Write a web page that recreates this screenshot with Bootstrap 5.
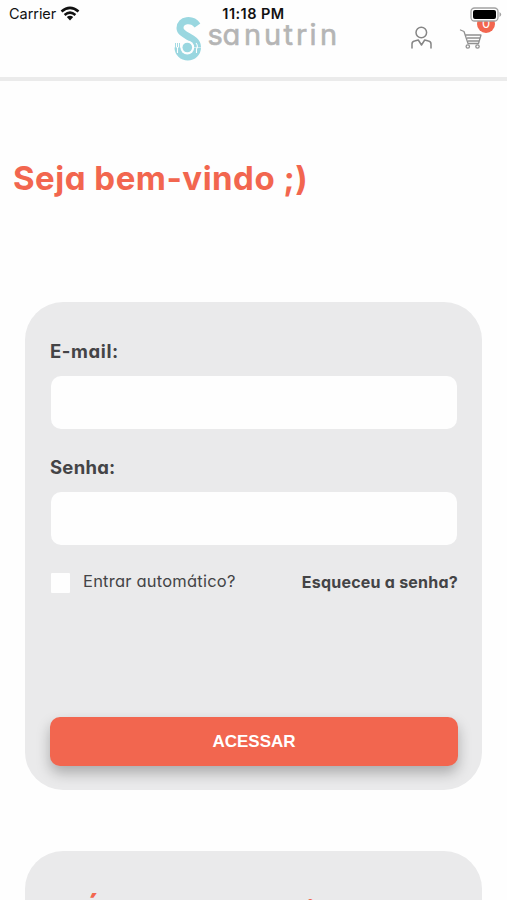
<!DOCTYPE html>
<html lang="pt-BR">
<head>
<meta charset="utf-8">
<meta name="viewport" content="width=device-width, initial-scale=1">
<title>Sanutrin</title>
<link href="https://cdn.jsdelivr.net/npm/bootstrap@5.3.0/dist/css/bootstrap.min.css" rel="stylesheet">
<style>
  html, body { height: 900px; overflow: hidden; }
  body { font-family: Inter, "Noto Sans", sans-serif; font-feature-settings: "cv11"; color: #444446; background: #fefefe; }
  .status-bar { font-size: 14px; line-height: 28px; height: 28px; color: #111; font-feature-settings: normal; z-index: 3; }
  .carrier { font-size: 14.5px; letter-spacing: -.05px; padding-left: 1px; }
  .clock { font-size: 14.5px; font-weight: 600; letter-spacing: .45px; }
  .site-header { height: 81px; border-bottom: 4px solid #ebebeb; }
  .logo { margin-left: 172px; margin-top: 14px; }
  .brand-text { font-size: 29px; font-weight: 400; fill: #b5b5b5; stroke: #b5b5b5; stroke-width: .6px; }
  .tools { margin-left: auto; margin-top: 25px; margin-right: 22px; gap: 24px; }
  .cart-count { width: 18px; height: 18px; top: -10px; left: 20px; font-size: 13px; line-height: 17px; background: #f2664f; }
  .headline { color: #f2664f; font-weight: 700; font-size: 32px; line-height: 48px; white-space: nowrap; }
  .welcome { margin: 73px 0 0 13px; font-size: 33px; letter-spacing: .5px; }
  .panel { background: #eaeaeb; border-radius: 38px; margin: 0 25px; }
  .login { margin-top: 100px; height: 488px; padding: 36px 24px 24px 25px; }
  .field-label { font-size: 18px; line-height: 27px; font-weight: 700; margin-bottom: 11px; }
  .label-email { font-size: 18.5px; letter-spacing: .6px; }
  .label-senha { font-size: 18.5px; letter-spacing: .25px; }
  .field { height: 53px; border: 0; border-radius: 10px; background: #fefefe; margin: 0 0 25px 1px; width: 406px; }
  .options { margin-top: -1px; height: 25px; font-size: 16px; }
  .form-check-input.auto { width: 19px; height: 20px; margin: 2px 13px 0 1px; border: 0; border-radius: 1px; background: #fefefe; }
  .auto-label { font-size: 16.5px; letter-spacing: .22px; }
  .forgot { color: #444446; font-weight: 700; text-decoration: none; letter-spacing: .23px; }
  .btn-enter { height: 49px; border: 0; border-radius: 10px; background: #f2664f; color: #fff; font: 700 17px "Liberation Sans", sans-serif; box-shadow: 0 7px 14px rgba(0,0,0,.27); }
  .signup { margin-top: 61px; height: 49px; padding: 38px 0 0 57px; border-radius: 38px 38px 0 0; overflow: hidden; }
  .signup .headline { letter-spacing: -.6px; }
</style>
</head>
<body>
<div class="status-bar position-absolute top-0 start-0 w-100">
  <div class="row g-0">
    <div class="col-4 d-flex align-items-center">
      <span class="carrier ms-2">Carrier</span>
      <svg class="ms-1" width="20" height="16" viewBox="0 0 20 16" fill="none" stroke="#111" stroke-width="2.6"><path d="M1.5 5.6Q10-1.7 18.5 5.6M4.6 8.9Q10 4.500 15.400 8.900"/><path d="M6.800 11Q10 8.500 13.200 11L10 14.400Z" fill="#111" stroke="none"/></svg>
    </div>
    <div class="col-4 text-center clock">11:18 PM</div>
    <div class="col-4 d-flex align-items-center justify-content-end">
      <svg width="33" height="15" viewBox="0 0 33 15" class="me-1"><rect x="1" y="1" width="27" height="13" rx="3.5" fill="#fff" stroke="#a2a2a2" stroke-width="1.300"/><rect x="3" y="3" width="23" height="9" rx="2" fill="#000"/><path d="M29.500 5Q33 7.500 29.500 10Z" fill="#a2a2a2"/></svg>
    </div>
  </div>
</div>
<header class="site-header d-flex align-items-start">
  <svg class="logo" width="168" height="50" viewBox="172 14 168 50">
    <path d="M197.500 25.500C192 18 180 19.500 180 28C180 36 197.500 37 197.500 47" fill="none" stroke="#9ad7e0" stroke-width="7"/>
    <path d="M174.500 47.500H201A13 12.800 0 0 1 174.500 47.500Z" fill="#9ad7e0"/>
    <circle cx="187.300" cy="47.500" r="6.900" fill="#fefefe"/>
    <circle cx="187.300" cy="47.500" r="4.800" fill="#9ad7e0"/>
    <path d="M175.500 43V48M177.500 43V48M179.500 43V48" fill="none" stroke="#9ad7e0" stroke-width=".9"/>
    <path d="M177.500 47V53M196 43Q198.500 46 196.500 49V53" fill="none" stroke="#fefefe" stroke-width="1.100"/>
    <text class="brand-text" x="207.500 222.500 244 264 283.500 296 309.500 320" y="45">sanutrin</text>
  </svg>
  <div class="tools d-flex">
    <svg width="24" height="26" viewBox="409 25 24 26" fill="none" stroke="#858585" stroke-width="1.500" stroke-linecap="round" stroke-linejoin="round"><circle cx="421.300" cy="32.500" r="5.300"/><path d="M412 48V44Q412 41.500 414.500 41L418.300 40L421.500 45L424.700 40L428.500 41Q431 41.500 431 44V48"/></svg>
    <div class="position-relative">
      <svg width="28" height="26" viewBox="457 25 28 26" fill="none" stroke="#909090" stroke-width="1.300" stroke-linecap="round" stroke-linejoin="round"><path d="M460.500 29L464 30.500L468 42.500H478.500L481 34H466M467.500 37H480M468.500 40H479"/><circle cx="467.800" cy="45.500" r="1.700"/><circle cx="477.500" cy="45.500" r="1.700"/></svg>
      <span class="cart-count position-absolute rounded-circle text-white text-center">0</span>
    </div>
  </div>
</header>
<main>
  <h1 class="headline welcome">Seja bem-vindo ;)</h1>
  <form class="panel login d-flex flex-column">
    <label class="field-label label-email" for="email">E-mail:</label>
    <input class="form-control field" type="email" id="email">
    <label class="field-label label-senha" for="senha">Senha:</label>
    <input class="form-control field" type="password" id="senha">
    <div class="options d-flex align-items-center">
      <input class="form-check-input auto" type="checkbox" id="auto">
      <label for="auto" class="auto-label">Entrar automático?</label>
      <a href="#" class="forgot ms-auto">Esqueceu a senha?</a>
    </div>
    <button type="button" class="btn btn-enter w-100 mt-auto">ACESSAR</button>
  </form>
  <section class="panel signup">
    <h2 class="headline">É novo por aqui?</h2>
  </section>
</main>
<script src="https://cdn.jsdelivr.net/npm/bootstrap@5.3.0/dist/js/bootstrap.bundle.min.js"></script>
</body>
</html>
